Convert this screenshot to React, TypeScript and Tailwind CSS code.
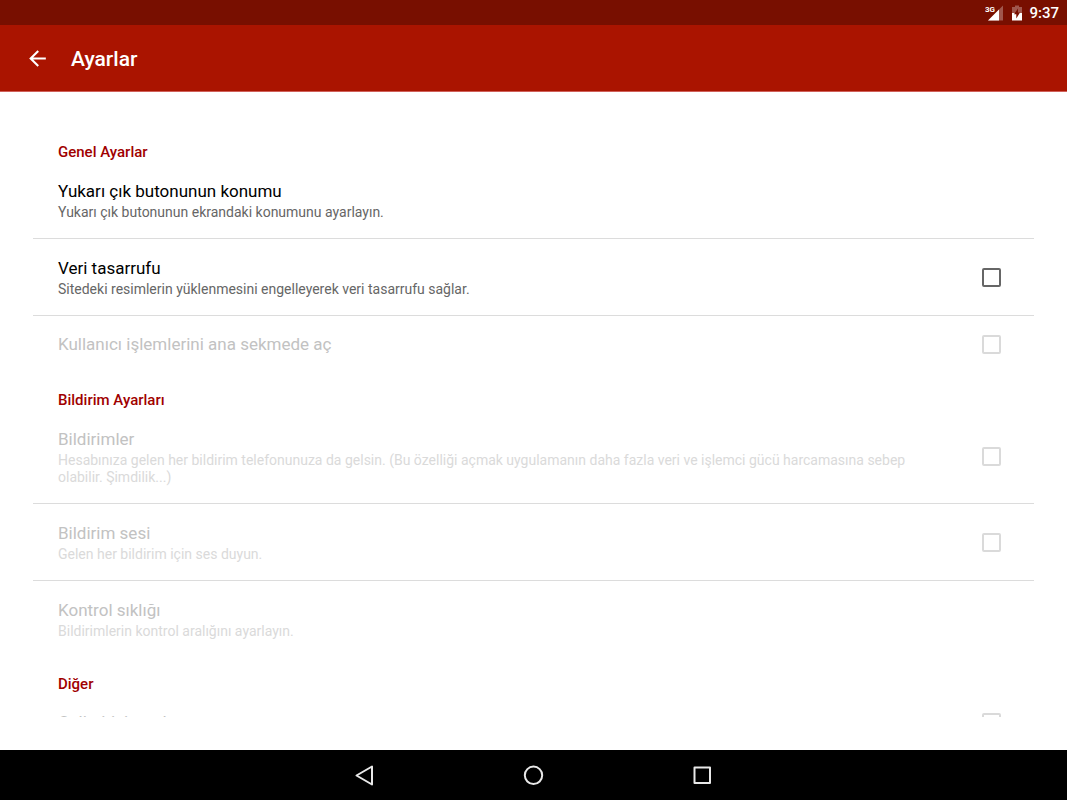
import { useState } from "react"

type Setting = {
  id: string
  title: string
  summary?: string
  checkbox?: boolean
  disabled?: boolean
}

const sections: { title: string; items: Setting[] }[] = [
  {
    title: "Genel Ayarlar",
    items: [
      {
        id: "konum",
        title: "Yukarı çık butonunun konumu",
        summary: "Yukarı çık butonunun ekrandaki konumunu ayarlayın.",
      },
      {
        id: "tasarruf",
        title: "Veri tasarrufu",
        summary: "Sitedeki resimlerin yüklenmesini engelleyerek veri tasarrufu sağlar.",
        checkbox: true,
      },
      { id: "sekme", title: "Kullanıcı işlemlerini ana sekmede aç", checkbox: true, disabled: true },
    ],
  },
  {
    title: "Bildirim Ayarları",
    items: [
      {
        id: "bildirimler",
        title: "Bildirimler",
        summary:
          "Hesabınıza gelen her bildirim telefonunuza da gelsin. (Bu özelliği açmak uygulamanın daha fazla veri ve işlemci gücü harcamasına sebep olabilir. Şimdilik...)",
        checkbox: true,
        disabled: true,
      },
      {
        id: "ses",
        title: "Bildirim sesi",
        summary: "Gelen her bildirim için ses duyun.",
        checkbox: true,
        disabled: true,
      },
      {
        id: "siklik",
        title: "Kontrol sıklığı",
        summary: "Bildirimlerin kontrol aralığını ayarlayın.",
        disabled: true,
      },
    ],
  },
  {
    title: "Diğer",
    items: [{ id: "gelistirici", title: "Geliştirici modu", checkbox: true, disabled: true }],
  },
]

function StatusBar() {
  return (
    <div className="flex h-[25px] shrink-0 items-center justify-end bg-[#780f00] pr-2 text-white">
      <svg className="mr-1.5 h-5 w-5" viewBox="0 0 20 20" aria-label="3G">
        <path d="M18 2.500v15H3z" fill="#fff" fillOpacity="0.3" />
        <path d="M14 6.500v11H3z" fill="#fff" />
        <text x="0" y="9" fontSize="8" fontWeight="700" fontFamily="Roboto, sans-serif" fill="#fff">3G</text>
      </svg>
      <svg className="mr-1.5 h-4 w-3" viewBox="0 0 12 16" aria-hidden="true">
        <path d="M4 0.500h4v1.500h3v7H1V2h3z" fill="#fff" fillOpacity="0.3" />
        <path d="M1 8h10v7.500H1z" fill="#fff" />
        <path d="M7 3.500L3 9.200h2.300V13.500L9 7.500H7z" fill="#780f00" />
      </svg>
      <span className="text-[15px] font-medium leading-5">9:37</span>
    </div>
  )
}

function SettingRow({ item, last }: { item: Setting; last: boolean }) {
  const [checked, setChecked] = useState(false)
  const Tag = item.checkbox ? "label" : "button"

  return (
    <li className={last ? "" : "border-b border-[#dcdcdc]"}>
      <Tag
        htmlFor={item.checkbox ? item.id : undefined}
        disabled={item.checkbox ? undefined : item.disabled}
        className={
          "flex w-full items-center justify-between pl-[25px] pr-[33px] text-left " +
          (item.summary ? "py-[17px]" : "py-4")
        }
      >
        <span className="block max-w-[890px]">
          <span className={"block text-[17px] leading-[25px] " + (item.disabled ? "text-[#c2c2c2]" : "text-black")}>
            {item.title}
          </span>
          {item.summary && (
            <span className={"block text-sm leading-[17px] " + (item.disabled ? "text-[#dadada]" : "text-[#666]")}>
              {item.summary}
            </span>
          )}
        </span>
        {item.checkbox && (
          <input
            id={item.id}
            type="checkbox"
            checked={checked}
            disabled={item.disabled}
            onChange={(e) => setChecked(e.target.checked)}
            className="h-[19px] w-[19px] shrink-0 appearance-none rounded-[2px] border-2 border-[#666] checked:bg-[#a00000] disabled:border-[#dadada]"
          />
        )}
      </Tag>
    </li>
  )
}

function NavBar() {
  return (
    <nav className="flex h-[50px] shrink-0 items-center justify-center gap-36 bg-black">
      <button aria-label="Geri" className="h-[25px] w-[25px]">
        <svg viewBox="0 0 25 25" fill="none" stroke="#e8e8e8" strokeWidth="2" strokeLinejoin="round">
          <path d="M20 3.500v18L4.500 12.500z" />
        </svg>
      </button>
      <button aria-label="Ana ekran" className="h-[25px] w-[25px]">
        <svg viewBox="0 0 25 25" fill="none" stroke="#e8e8e8" strokeWidth="2">
          <circle cx="12.500" cy="12.300" r="8.700" />
        </svg>
      </button>
      <button aria-label="Son uygulamalar" className="h-[25px] w-[25px]">
        <svg viewBox="0 0 25 25" fill="none" stroke="#e8e8e8" strokeWidth="2" strokeLinejoin="round">
          <path d="M4.500 4.500h15.500v15.500H4.500z" />
        </svg>
      </button>
    </nav>
  )
}

export default function App() {
  return (
    <div className="flex h-screen flex-col bg-white font-[Roboto,sans-serif]">
      <StatusBar />
      <header className="flex h-[67px] shrink-0 items-center border-b border-[#d0605a] bg-[#aa1400] pl-[25px] text-white">
        <button aria-label="Geri dön" className="h-[25px] w-[25px]">
          <svg viewBox="0 0 24 24" fill="currentColor">
            <path d="M20 11H7.830l5.590-5.590L12 4l-8 8 8 8 1.410-1.410L7.830 13H20v-2z" />
          </svg>
        </button>
        <h1 className="ml-[21px] pt-0.5 text-[21px] font-medium leading-6">Ayarlar</h1>
      </header>
      <main className="flex min-h-0 flex-1 p-[33px]">
        <div className="flex-1 overflow-hidden">
          {sections.map((section) => (
            <section key={section.title}>
              <h2 className="pt-[18px] pb-px pl-[25px] text-[15px] font-medium leading-[18px] text-[#a00000]">
                {section.title}
              </h2>
              <ul>
                {section.items.map((item, i) => (
                  <SettingRow key={item.id} item={item} last={i === section.items.length - 1} />
                ))}
              </ul>
            </section>
          ))}
        </div>
      </main>
      <NavBar />
    </div>
  )
}
